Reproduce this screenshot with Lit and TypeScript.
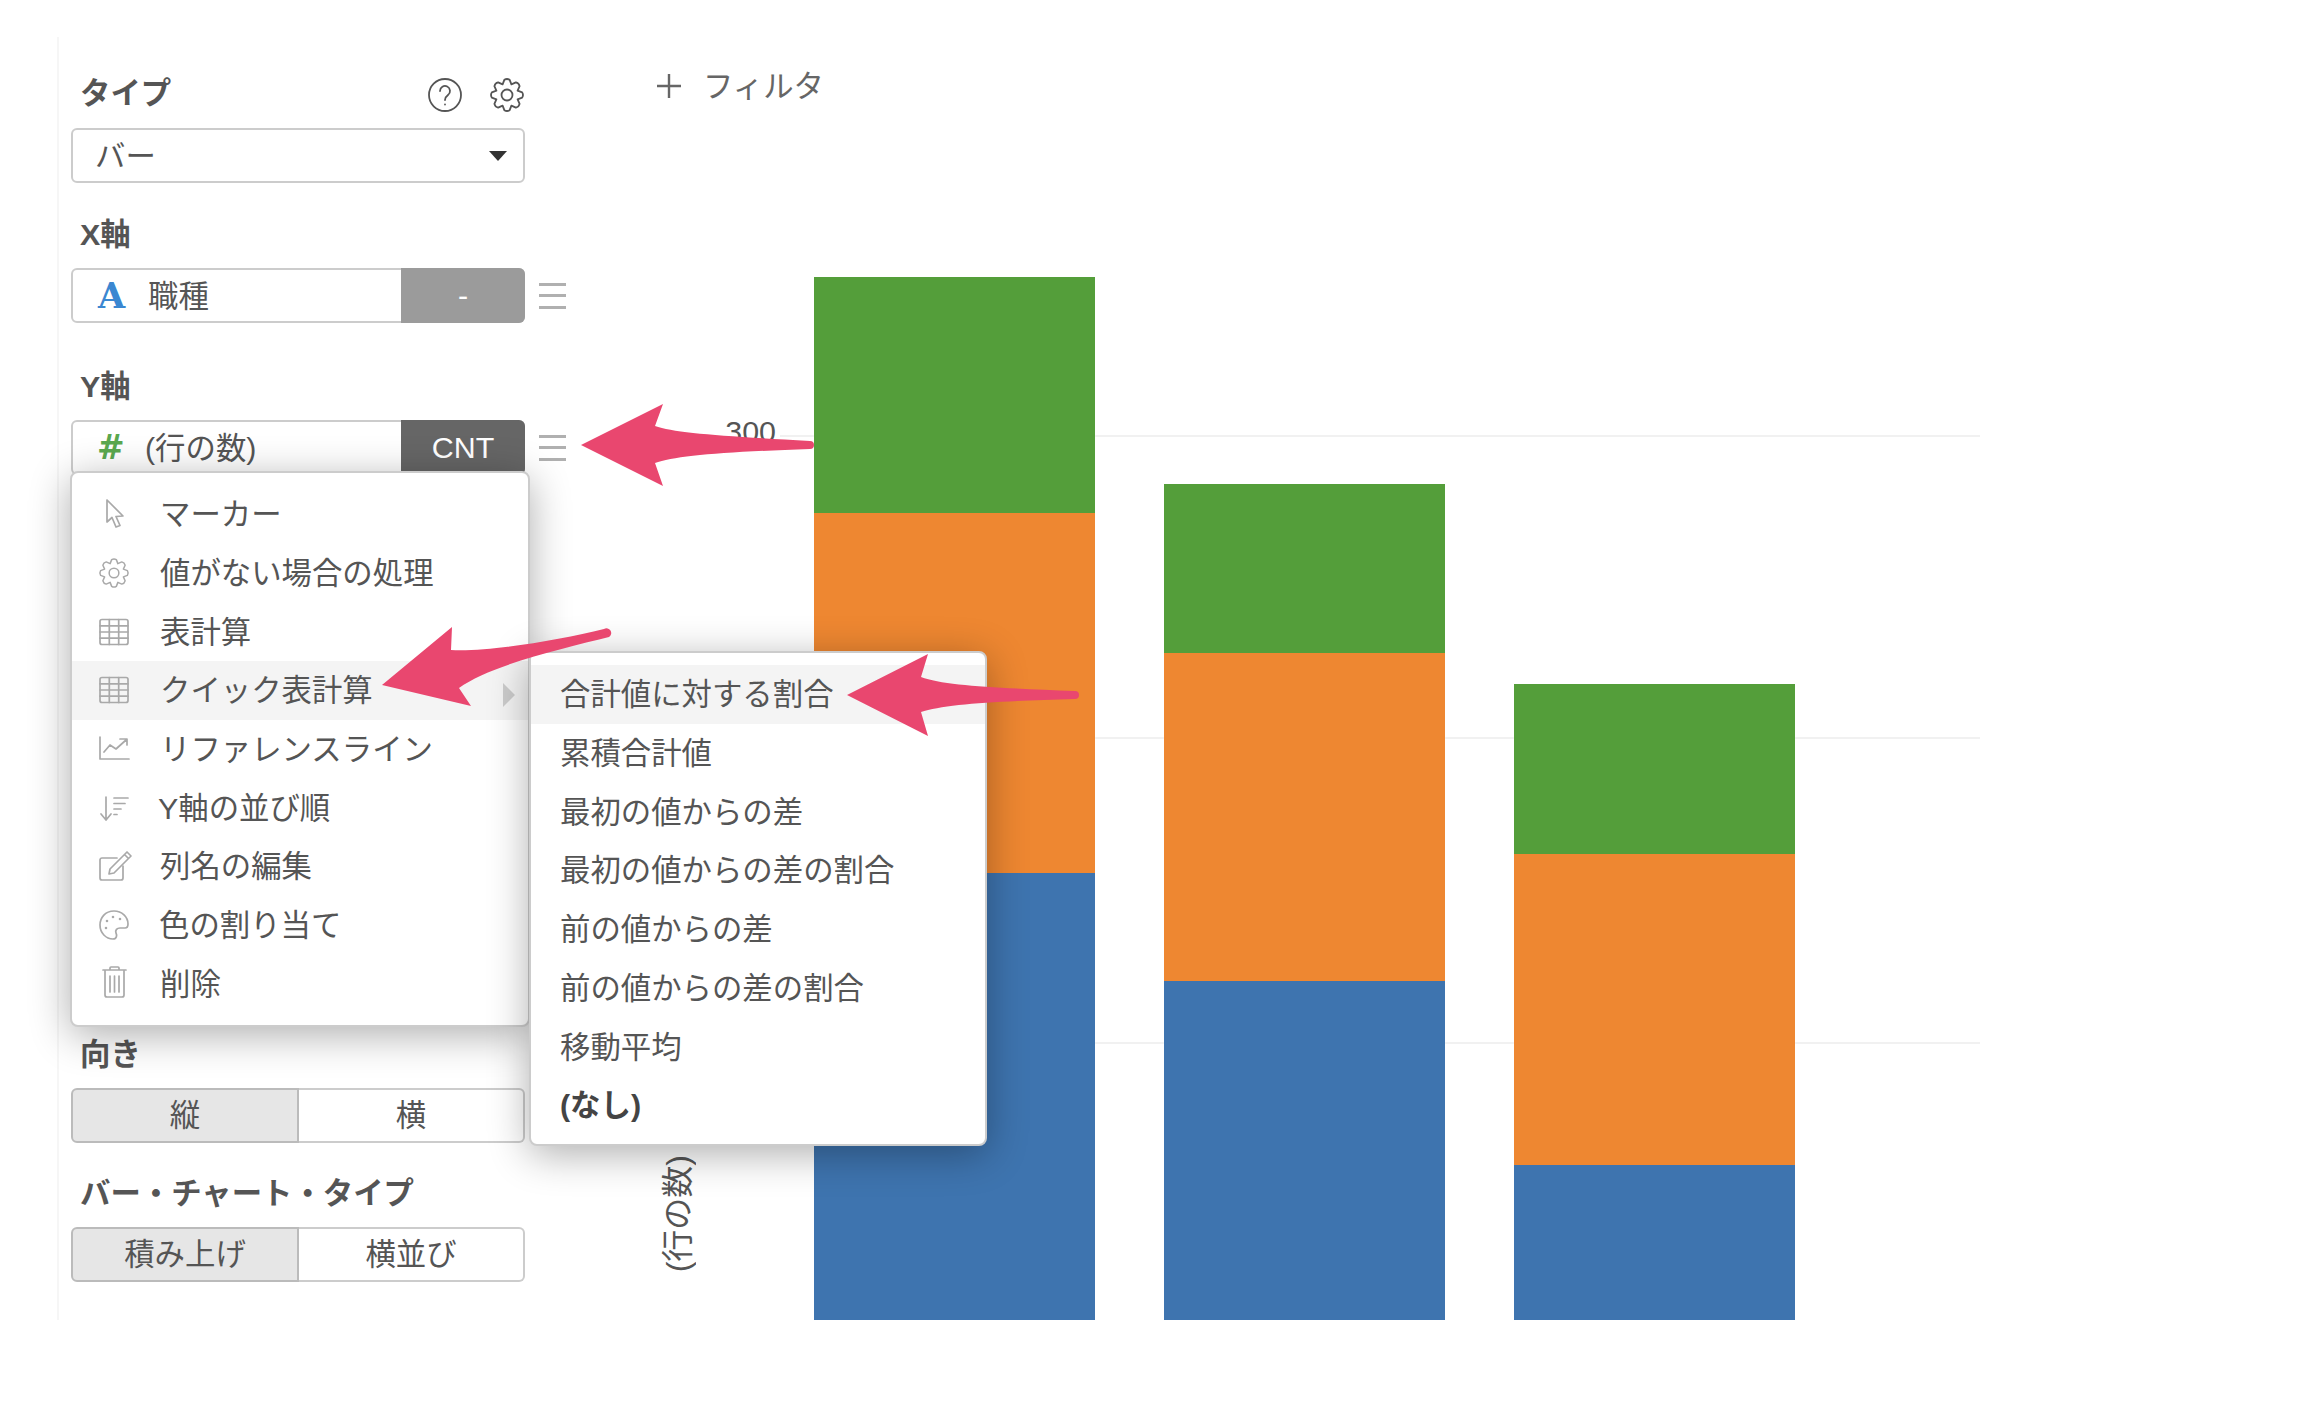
import {css, html, LitElement} from 'lit';
import {customElement} from 'lit/decorators.js';

// outline of a cog with slightly rounded teeth
function gearPath(c: number, ro: number, ri: number, teeth = 8): string {
  const step = (Math.PI * 2) / teeth;
  const pt = (r: number, a: number) =>
    `${(c + r * Math.cos(a)).toFixed(2)} ${(c + r * Math.sin(a)).toFixed(2)}`;
  let d = '';
  for (let i = 0; i < teeth; i++) {
    const a = i * step - Math.PI / 2;
    d += `${i === 0 ? 'M' : 'L'}${pt(ri, a - step * 0.5)} `;
    d += `L${pt(ro - 0.6, a - step * 0.22)} Q${pt(ro + 0.8, a)} ${pt(ro - 0.6, a + step * 0.22)} `;
  }
  return d + 'Z';
}

const gearIcon = (size: number) => html`
  <svg class="ico" width=${size} height=${size} viewBox="0 0 34 34">
    <path d=${gearPath(17, 16, 11.5)}></path>
    <circle cx="17" cy="17" r="5.5"></circle>
  </svg>`;

const tableIcon = html`
  <svg class="ico" width="30" height="30" viewBox="0 0 30 30">
    <rect x="1" y="2.5" width="28" height="25" rx="2"></rect>
    <path d="M10.3 2.5V27.5M19.7 2.5V27.5M1 8.8H29M1 15H29M1 21.2H29"></path>
  </svg>`;

const MENU_ITEMS = [
  {
    label: 'マーカー',
    icon: html`<svg class="ico" width="30" height="30" viewBox="0 0 30 30">
      <path d="M8 1V23L13 18.5L17 28L21 26.5L17 17.5L24 17Z"></path></svg>`,
  },
  {label: '値がない場合の処理', icon: gearIcon(30)},
  {label: '表計算', icon: tableIcon},
  {label: 'クイック表計算', icon: tableIcon, open: true},
  {
    label: 'リファレンスライン',
    icon: html`<svg class="ico" width="30" height="30" viewBox="0 0 30 30">
      <path d="M1 3V25H30M5 18L11 11L17 15L27 6M21 5H28V11"></path></svg>`,
  },
  {
    label: 'Y軸の並び順',
    shift: -2,
    icon: html`<svg class="ico" width="30" height="30" viewBox="0 0 30 30">
      <path d="M7 4V27M2 21L7 27L12 21M15 5H29M15 10.5H26M15 16H22M15 21.5H18"></path></svg>`,
  },
  {
    label: '列名の編集',
    icon: html`<svg class="ico" width="30" height="30" viewBox="0 0 30 30">
      <path d="M18 7H3a2 2 0 0 0-2 2V27a2 2 0 0 0 2 2H22a2 2 0 0 0 2-2V15"></path>
      <path d="M11 18L10 23L15 22L32 5L28 1ZM25.5 3.5L29.5 7.5"></path></svg>`,
  },
  {
    label: '色の割り当て',
    shift: -1,
    icon: html`<svg class="ico" width="30" height="30" viewBox="0 0 30 30">
      <path d="M15 1C6 1 1 8 1 15C1 23 7 29 14 29C18 29 18 25 17 23C16 20 18 18 21 18H26C28 18 29 16 29 14C29 7 23 1 15 1Z"></path>
      <path class="dots" d="M8 11h.01M14 7h.01M21 9h.01M7 18h.01"></path></svg>`,
  },
  {
    label: '削除',
    icon: html`<svg class="ico" width="30" height="30" viewBox="0 0 30 30">
      <path d="M4 1H27M11 1V-1a1 1 0 0 1 1-1H19a1 1 0 0 1 1 1V1M6 2V26a2 2 0 0 0 2 2H23a2 2 0 0 0 2-2V2M11 7V23M15.5 7V23M20 7V23"></path></svg>`,
  },
];

const SUB_ITEMS = [
  '合計値に対する割合',
  '累積合計値',
  '最初の値からの差',
  '最初の値からの差の割合',
  '前の値からの差',
  '前の値からの差の割合',
  '移動平均',
];

// segment heights in pixels, top to bottom: green, orange, blue
const BARS = [
  [236, 360, 447],
  [169, 328, 339],
  [170, 311, 155],
];
const BAR_CLASSES = ['green', 'orange', 'blue'];
const GRID_LINES = [158, 460, 765];

@customElement('app-root')
export class AppRoot extends LitElement {
  static override styles = css`
    :host {
      display: flex;
      position: relative;
      width: 2320px;
      height: 1408px;
      overflow: hidden;
      background: #fff;
      color: #555;
      font: 30.4px/40px "Liberation Sans", "Noto Sans CJK JP", sans-serif;
    }

    .sidebar {
      position: relative;
      z-index: 2;
      box-sizing: border-box;
      flex: none;
      width: 473px;
      height: 1283px;
      margin: 37px 0 0 57px;
      padding: 35px 0 0 12px;
      border-left: 2px solid #f6f6f6;
    }
    .label-row {
      display: flex;
      align-items: center;
      width: 454px;
      margin-bottom: 14px;
    }
    .label {
      display: block;
      padding-left: 9px;
      margin-bottom: 13px;
      font-weight: 700;
      line-height: 42px;
    }
    .label-row .label {
      flex: 1;
      margin-bottom: 0;
    }
    .ico {
      flex: none;
      overflow: visible;
      fill: none;
      stroke: #a9a9a9;
      stroke-width: 1.7;
      stroke-linejoin: round;
      stroke-linecap: round;
    }
    .label-row .ico {
      stroke: #555;
      stroke-width: 1.8;
      margin: 4px 1px 0 27px;
    }
    .dots {
      stroke-width: 2.6;
    }

    .select {
      box-sizing: border-box;
      display: flex;
      align-items: center;
      justify-content: space-between;
      width: 454px;
      height: 55px;
      padding: 0 16px 0 22px;
      margin-bottom: 30px;
      border: 2px solid #ccc;
      border-radius: 6px;
    }
    .caret {
      width: 0;
      height: 0;
      border-left: 9px solid transparent;
      border-right: 9px solid transparent;
      border-top: 10px solid #333;
    }

    .axis-row {
      display: flex;
      align-items: center;
      gap: 14px;
      margin-bottom: 42px;
    }
    .field {
      box-sizing: border-box;
      display: flex;
      align-items: center;
      flex: none;
      width: 454px;
      height: 55px;
      border: 2px solid #ccc;
      border-radius: 6px;
    }
    .type-icon {
      flex: none;
      width: 75px;
      padding-left: 25px;
      box-sizing: border-box;
      font-weight: 700;
    }
    .type-icon.text {
      color: #3b87d1;
      font-family: "DejaVu Serif", serif;
      font-size: 35px;
    }
    .type-icon.num {
      color: #5aa84f;
      width: 72px;
      padding-left: 24px;
      font-family: "DejaVu Sans", sans-serif;
      font-size: 33px;
    }
    .field-name {
      flex: 1;
      white-space: nowrap;
    }
    .agg {
      align-self: stretch;
      flex: none;
      width: 124px;
      margin: -2px -2px -2px 0;
      border-radius: 0 6px 6px 0;
      color: #fff;
      text-align: center;
      line-height: 55px;
    }
    .agg.off {
      background: #9b9b9b;
    }
    .agg.on {
      background: #666;
    }
    .handle {
      flex: none;
      width: 27px;
      height: 20px;
      border-top: 3px solid #b0b0b0;
      border-bottom: 3px solid #b0b0b0;
      background: linear-gradient(#b0b0b0, #b0b0b0) center / 100% 3px no-repeat;
    }

    .y-section {
      position: relative;
      height: 668px;
    }
    .menu, .submenu {
      position: absolute;
      box-sizing: border-box;
      background: #fff;
      border: 2px solid #ccc;
      border-radius: 8px;
      box-shadow: 0 8px 40px rgba(0, 0, 0, 0.32);
    }
    .menu {
      top: 106px;
      left: -1px;
      width: 460px;
      padding: 12px 0 12px;
    }
    .submenu {
      top: -10px;
      left: 457px;
      width: 458px;
      padding: 12px 0 9px;
    }
    .row {
      position: relative;
      display: flex;
      align-items: center;
      height: 58.7px;
      white-space: nowrap;
    }
    .menu > .row {
      padding-left: 27px;
      gap: 31px;
    }
    .submenu .row {
      padding-left: 29px;
    }
    .row.active {
      background: #f4f4f4;
    }
    .row.none {
      font-weight: 700;
      color: #444;
    }
    .more {
      position: absolute;
      right: 13px;
      top: 22px;
      border-top: 12px solid transparent;
      border-bottom: 12px solid transparent;
      border-left: 12px solid #ccc;
    }

    .toggle {
      display: flex;
      width: 454px;
      height: 55px;
      margin-bottom: 29px;
    }
    .toggle div {
      box-sizing: border-box;
      flex: 1;
      border: 2px solid #ccc;
      border-radius: 0 6px 6px 0;
      text-align: center;
      line-height: 51px;
    }
    .toggle .on {
      flex: none;
      width: 228px;
      background: #e6e6e6;
      border-color: #bbb;
      border-radius: 6px 0 0 6px;
    }
    .toggle .on + div {
      border-left: none;
    }

    .main {
      flex: 1;
    }
    .filter {
      display: flex;
      align-items: center;
      gap: 21px;
      height: 40px;
      margin-top: 66px;
      padding-left: 126px;
      color: #666;
    }
    .filter svg {
      stroke: #666;
      stroke-width: 2.4;
      fill: none;
    }
    .plot {
      position: relative;
      display: flex;
      align-items: flex-end;
      gap: 67px;
      box-sizing: border-box;
      width: 1200px;
      height: 1043px;
      margin: 171px 0 0 250px;
      padding-left: 33px;
    }
    .grid {
      position: absolute;
      left: 0;
      right: 0;
      height: 2px;
      background: #f1f1f1;
    }
    .tick {
      position: absolute;
      right: 1204px;
      top: 134px;
    }
    .axis-title {
      position: absolute;
      left: -118px;
      top: 878px;
      writing-mode: vertical-rl;
      text-orientation: sideways;
      transform: rotate(180deg);
      white-space: nowrap;
      font-size: 32px;
      line-height: 32px;
    }
    .bar {
      position: relative;
      display: flex;
      flex-direction: column;
      box-sizing: border-box;
      width: 283px;
      border: 1px solid rgba(255, 255, 255, 0.25);
      border-bottom: none;
    }
    .green {
      background: #549e3a;
    }
    .orange {
      background: #ee8731;
    }
    .blue {
      background: #3e74af;
    }

    .arrows {
      position: absolute;
      left: 0;
      top: 0;
      z-index: 5;
      pointer-events: none;
    }
    .arrows path {
      fill: #e9476f;
    }
  `;

  private renderToggle(on: string, off: string) {
    return html`<div class="toggle"><div class="on">${on}</div><div>${off}</div></div>`;
  }

  private renderSubmenu() {
    return html`
      <div class="submenu">
        ${SUB_ITEMS.map(
          (item, i) => html`<div class="row ${i === 0 ? 'active' : ''}">${item}</div>`
        )}
        <div class="row none">(なし)</div>
      </div>`;
  }

  private renderMenu() {
    return html`
      <div class="menu">
        ${MENU_ITEMS.map(
          (item) => html`
            <div class="row ${item.open ? 'active' : ''}">
              ${item.icon}
              <span style=${item.shift ? `margin-left:${item.shift}px` : ''}>${item.label}</span>
              ${item.open ? html`<i class="more"></i>${this.renderSubmenu()}` : ''}
            </div>`
        )}
      </div>`;
  }

  override render() {
    return html`
      <div class="sidebar">
        <div class="label-row">
          <span class="label">タイプ</span>
          <svg class="ico help" width="34" height="34" viewBox="0 0 34 34">
            <circle cx="17" cy="17" r="16"></circle>
            <path d="M12 13a5 5 0 1 1 8 4c-2 1.5-3 2.5-3 5M17 26.5v.1"></path>
          </svg>
          ${gearIcon(34)}
        </div>
        <div class="select"><span>バー</span><i class="caret"></i></div>

        <span class="label">X軸</span>
        <div class="axis-row">
          <div class="field">
            <span class="type-icon text">A</span>
            <span class="field-name">職種</span>
            <span class="agg off">-</span>
          </div>
          <i class="handle"></i>
        </div>

        <div class="y-section">
          <span class="label">Y軸</span>
          <div class="axis-row">
            <div class="field">
              <span class="type-icon num">#</span>
              <span class="field-name">(行の数)</span>
              <span class="agg on">CNT</span>
            </div>
            <i class="handle"></i>
          </div>
          ${this.renderMenu()}
        </div>

        <span class="label">向き</span>
        ${this.renderToggle('縦', '横')}
        <span class="label">バー・チャート・タイプ</span>
        ${this.renderToggle('積み上げ', '横並び')}
      </div>

      <div class="main">
        <div class="filter">
          <svg width="26" height="26" viewBox="0 0 26 26"><path d="M13 1V25M1 13H25"></path></svg>
          <span>フィルタ</span>
        </div>
        <div class="plot">
          ${GRID_LINES.map((top) => html`<i class="grid" style="top:${top}px"></i>`)}
          <span class="tick">300</span>
          <span class="axis-title">(行の数)</span>
          ${BARS.map(
            (bar) => html`
              <div class="bar">
                ${bar.map(
                  (h, i) => html`<div class=${BAR_CLASSES[i]} style="height:${h}px"></div>`
                )}
              </div>`
          )}
        </div>
      </div>

      <svg class="arrows" width="2320" height="1408" viewBox="0 0 2320 1408">
        <path d="M581 445L663 404L655 426C675 433 720 436 810 441A4 4 0 0 1 810 449C720 452 675 456 655 463L663 486Z"></path>
        <path d="M382 685L452 627L451 650C490 652 560 640 604 629A4.5 4.5 0 0 1 609 637C565 648 490 665 459 688L471 706Z"></path>
        <path d="M847 695L928 654L921 677C945 686 1000 688 1075 691A4 4 0 0 1 1075 699C1000 701 945 704 921 712L928 736Z"></path>
      </svg>
    `;
  }
}

declare global {
  interface HTMLElementTagNameMap {
    'app-root': AppRoot;
  }
}
